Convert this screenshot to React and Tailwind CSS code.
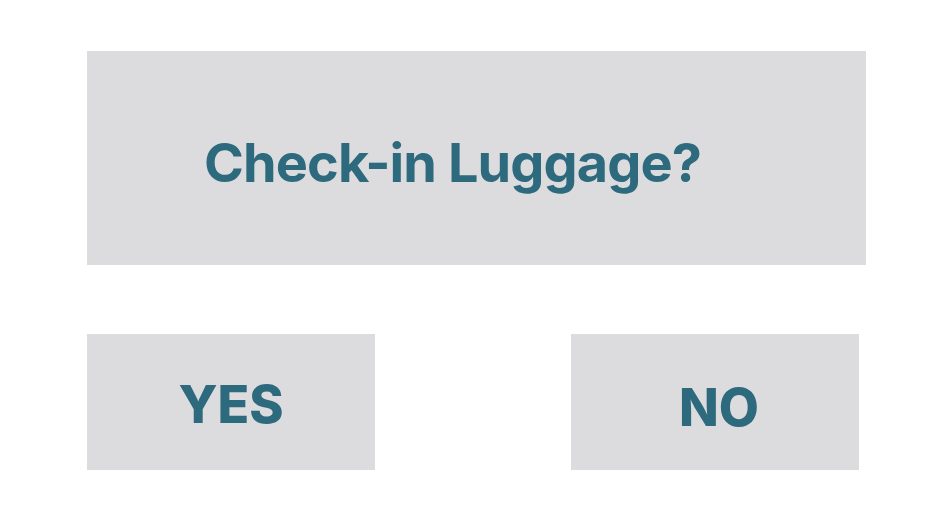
export default function App() {
  const font = { fontFamily: 'Inter, "Open Sans", sans-serif' }
  return (
    <div className="w-[927px] h-[516px] bg-white flex flex-col pt-[51px] pl-[87px]" style={font}>
      {/* Question card */}
      <div className="w-[779px] h-[214px] bg-[#dcdcde] flex items-center pl-[117px] pt-[10px]">
        <h1 className="text-[54px] font-bold text-[#2e6a7e] leading-none tracking-[-0.9px]">
          Check-in Luggage?
        </h1>
      </div>

      {/* Answer buttons */}
      <div className="flex gap-[196px] mt-[69px]">
        <button className="w-[288px] h-[136px] bg-[#dcdcde] flex items-center justify-center pt-[5px] text-[52px] font-extrabold text-[#2e6a7e] leading-none">
          YES
        </button>
        <button className="w-[288px] h-[136px] bg-[#dcdcde] flex items-center justify-center pt-[12px] pl-[8px] text-[52px] font-extrabold text-[#2e6a7e] leading-none">
          NO
        </button>
      </div>
    </div>
  )
}
